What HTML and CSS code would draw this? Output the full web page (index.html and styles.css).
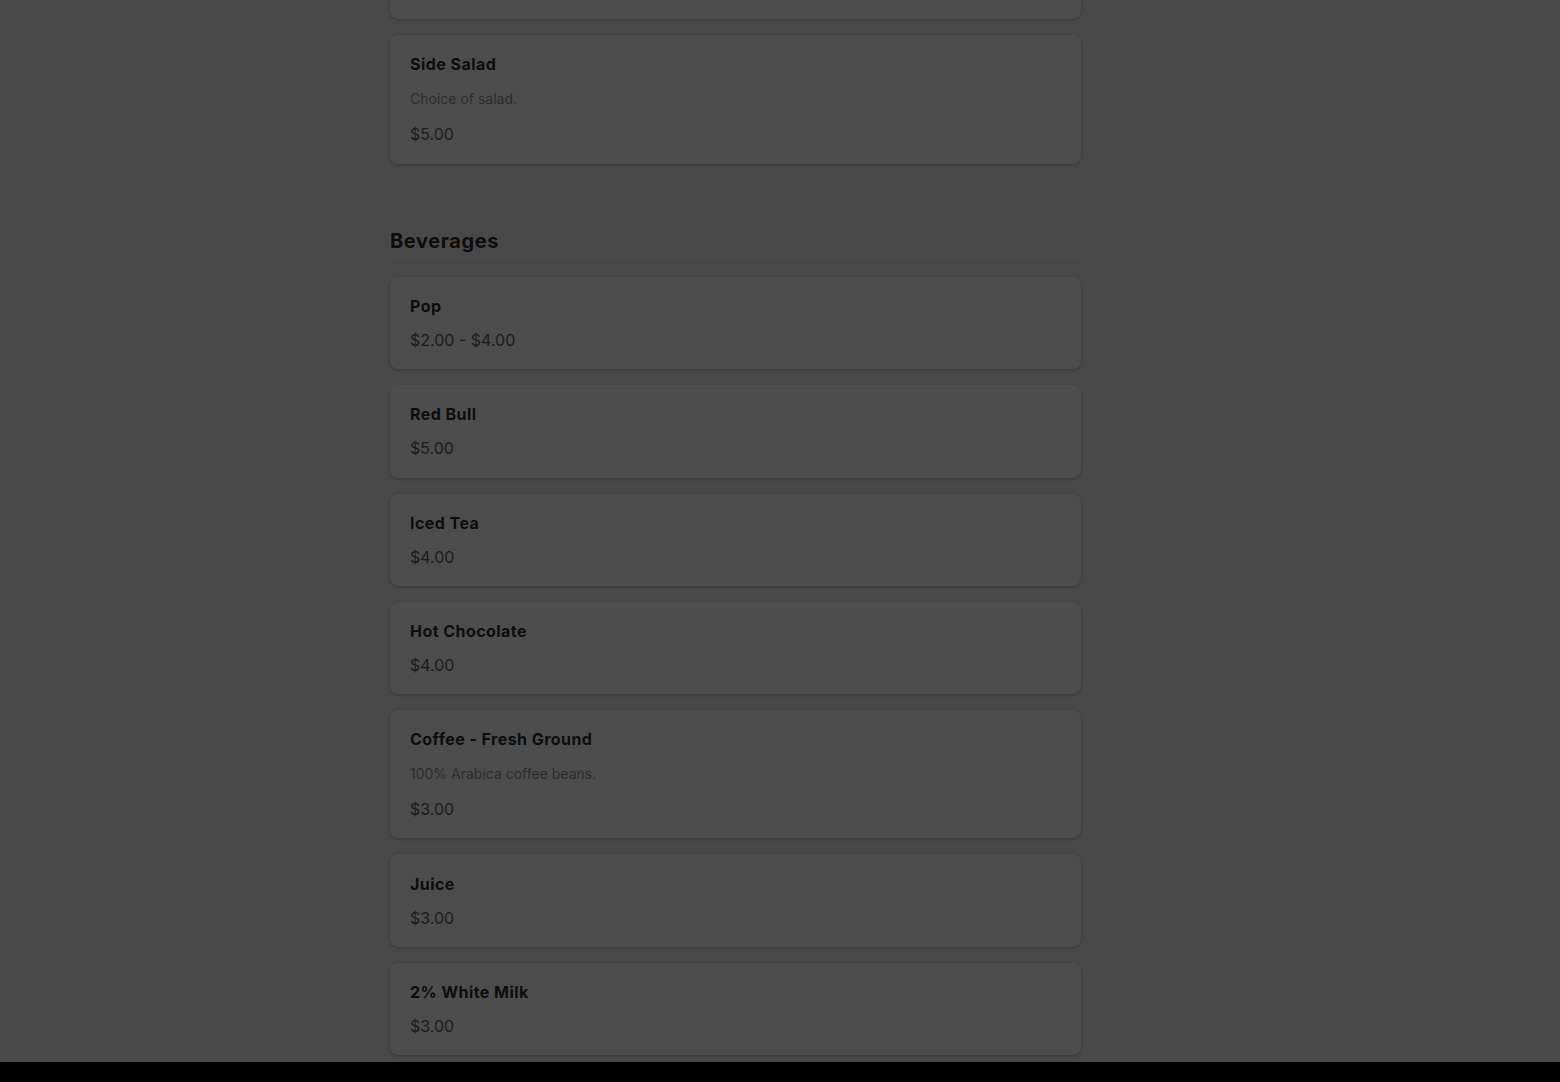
FILE: index.html
```html
<!DOCTYPE html>
<html>
<head>
  <title>Menu</title>
  <link rel="stylesheet" href="styles.css">
</head>
<body>
  <div class="page">
    <div class="menu">
      <div class="section first">
        <div class="item">
          <div class="item-name">Fries</div>
          <div class="item-price">$4.00</div>
        </div>
        <div class="item">
          <div class="item-name">Side Salad</div>
          <div class="item-desc">Choice of salad.</div>
          <div class="item-price">$5.00</div>
        </div>
      </div>

      <div class="section">
        <h2 class="section-title">Beverages</h2>
        <div class="item">
          <div class="item-name">Pop</div>
          <div class="item-price">$2.00 - $4.00</div>
        </div>
        <div class="item">
          <div class="item-name">Red Bull</div>
          <div class="item-price">$5.00</div>
        </div>
        <div class="item">
          <div class="item-name">Iced Tea</div>
          <div class="item-price">$4.00</div>
        </div>
        <div class="item">
          <div class="item-name">Hot Chocolate</div>
          <div class="item-price">$4.00</div>
        </div>
        <div class="item">
          <div class="item-name">Coffee - Fresh Ground</div>
          <div class="item-desc">100% Arabica coffee beans.</div>
          <div class="item-price">$3.00</div>
        </div>
        <div class="item">
          <div class="item-name">Juice</div>
          <div class="item-price">$3.00</div>
        </div>
        <div class="item">
          <div class="item-name">2% White Milk</div>
          <div class="item-price">$3.00</div>
        </div>
      </div>
    </div>
    <div class="side"></div>
  </div>

  <div class="bottom-bar"></div>
</body>
</html>
```
FILE: styles.css
```css
body {
  font-family: 'Inter', 'Open Sans', sans-serif;
  background: #494949;
  margin: 0;
  padding: 0;
  color: #0d0d0d;
}
.page {
  display: flex;
  justify-content: center;
}
.menu {
  width: 691px;
}
.side {
  width: 89px;
}
.section {
  display: flex;
  flex-direction: column;
  gap: 16px;
  margin-bottom: 65.5px;
}
.section.first {
  margin-top: -73px;
}
.section-title {
  margin: 0;
  font-size: 20px;
  line-height: 24px;
  font-weight: 700;
  letter-spacing: 0.6px;
  color: #0d0d0d;
  padding-bottom: 10px;
  border-bottom: 1px solid #454545;
  margin-bottom: -3px;
}
.item {
  display: flex;
  flex-direction: column;
  gap: 14px;
  padding: 19.15px 20px;
  background: #4d4d4d;
  border-radius: 8px;
  box-shadow: 0 1px 3px rgba(0,0,0,0.25);
}
.item-name {
  font-size: 16px;
  line-height: 20px;
  font-weight: 700;
  letter-spacing: 0.45px;
  color: #0d0d0d;
}
.item-desc {
  font-size: 14px;
  line-height: 22px;
  color: #2e2e2e;
}
.item-price {
  font-size: 16px;
  line-height: 20px;
  color: #1c1c1c;
}
.bottom-bar {
  position: fixed;
  left: 0;
  right: 0;
  bottom: 0;
  height: 20px;
  background: #000;
}
```
